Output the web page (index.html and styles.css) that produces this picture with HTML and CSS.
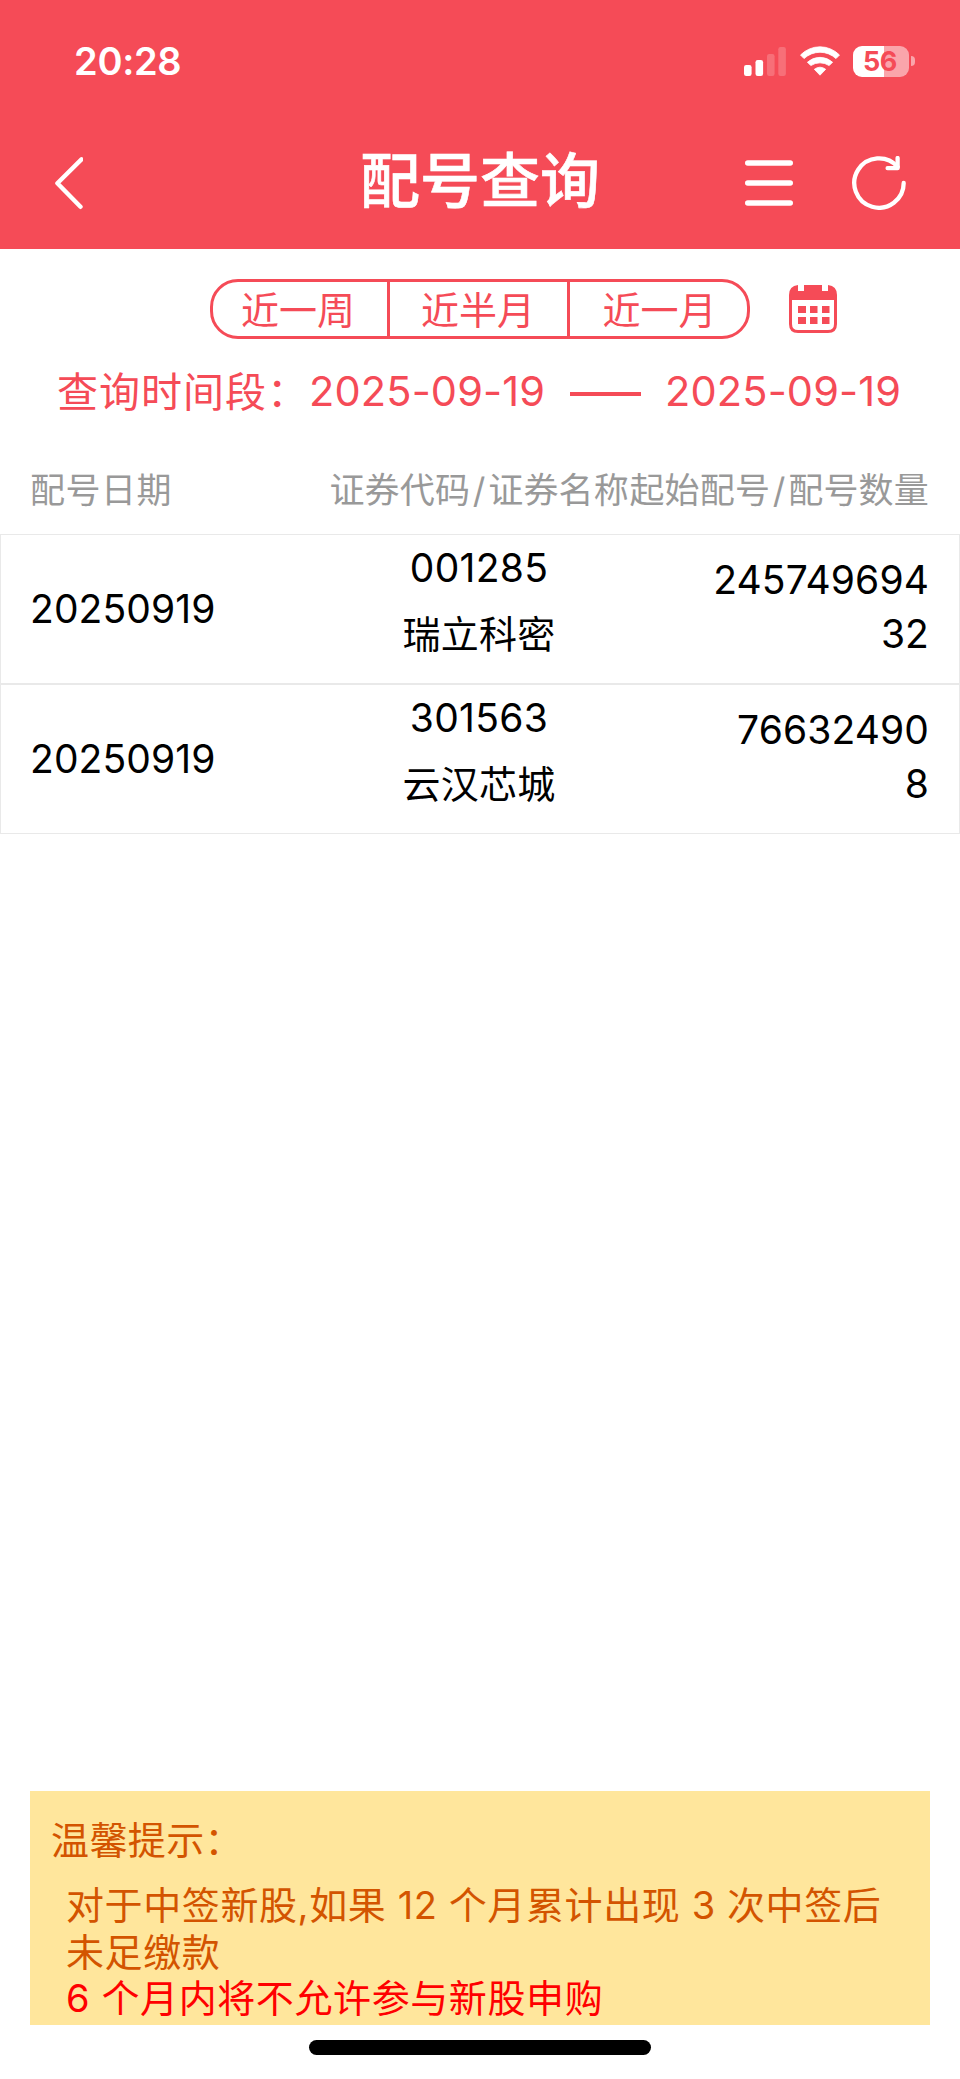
FILE: index.html
```html
<!DOCTYPE html>
<html lang="zh-CN">
<head>
<meta charset="utf-8">
<title>配号查询</title>
<link rel="stylesheet" href="styles.css">
</head>
<body>
<div class="screen">
  <header class="top">
    <div class="status">
      <span class="clock">20:28</span>
      <div class="status-icons">
        <svg class="signal" viewBox="0 0 42 30" width="42" height="30" fill="#fff">
          <rect x="0" y="19" width="7.6" height="11" rx="2.2"/>
          <rect x="11.5" y="14" width="7.6" height="16" rx="2.2"/>
          <rect x="23" y="8" width="7.6" height="22" rx="2.2" opacity=".2"/>
          <rect x="34.3" y="1" width="7.6" height="29" rx="2.2" opacity=".2"/>
        </svg>
        <svg class="wifi" viewBox="0 0 40 30" width="40" height="30" fill="#fff" stroke="#fff" stroke-width=".8" stroke-linejoin="round">
          <path d="M.5 9A27.3 27.3 0 0 1 39.5 9L36 12.6A23.4 23.4 0 0 0 4 12.6Z"/>
          <path d="M7.4 16.2A18.8 18.8 0 0 1 32.6 16.2L29.2 19.6A16.8 16.8 0 0 0 10.8 19.6Z"/>
          <path d="M14.3 23.3A9.6 9.6 0 0 1 25.7 23.3L20 29.2Z"/>
        </svg>
        <div class="battery"><span class="battery-level">56</span><i class="battery-cap"></i></div>
      </div>
    </div>
    <nav class="nav">
      <svg class="back" viewBox="0 0 30 56" width="30" height="56" fill="none" stroke="#fff" stroke-width="4.4" stroke-linecap="round" stroke-linejoin="round"><path d="M28.5 4.3L4.4 28.2L27.5 51.8"/></svg>
      <h1 class="title">配号查询</h1>
      <div class="actions">
        <svg viewBox="0 0 48 48" width="48" height="48" stroke="#fff" stroke-width="5.6" stroke-linecap="round"><path d="M2.8 4h42.4M2.8 24h42.4M2.8 44h42.4"/></svg>
        <svg viewBox="0 0 54 54" width="54" height="54" fill="none" stroke="#fff" stroke-width="4.3" stroke-linecap="round" stroke-linejoin="round"><path d="M51.7 27A24.7 24.7 0 1 1 45.6 10.8"/><path d="M45.6 2V12.2H35.6"/></svg>
      </div>
    </nav>
  </header>

  <main class="content">
    <div class="filters">
      <div class="segments">
        <span class="segment first">近一周</span>
        <span class="segment">近半月</span>
        <span class="segment last">近一月</span>
      </div>
      <svg class="calendar" viewBox="0 0 48 48" width="48" height="48" fill="#f54b57">
        <path d="M9 0V6H15V0H33V6H39V0Q48 1 48 10V39Q48 48 39 48H9Q0 48 0 39V10Q0 1 9 0ZM3 15V39Q3 45 9 45H39Q45 45 45 39V15Z" fill-rule="evenodd"/>
        <path d="M9 21h8v7H9zM21 21h7.5v7H21zM33 21h7.5v7H33zM9 32h8v7H9zM21 32h7.5v7H21zM33 32h7.5v7H33z"/>
      </svg>
    </div>
    <div class="period">
      <span class="period-label">查询时间段：</span>
      <span class="date">2025-09-19</span>
      <i class="dash"></i>
      <span class="date">2025-09-19</span>
    </div>

    <div class="columns">
      <span class="column-start">配号日期</span>
      <span class="column-end">证券代码<b class="slash">/</b>证券名称</span>
      <span class="column-end">起始配号<b class="slash">/</b>配号数量</span>
    </div>
    <section class="rows">
      <article class="row">
        <span>20250919</span>
        <div class="security"><span class="code">001285</span><span class="name">瑞立科密</span></div>
        <div class="allocation"><span>245749694</span><span>32</span></div>
      </article>
      <article class="row">
        <span>20250919</span>
        <div class="security"><span class="code">301563</span><span class="name">云汉芯城</span></div>
        <div class="allocation"><span>76632490</span><span>8</span></div>
      </article>
    </section>
  </main>

  <aside class="notice">
    <p class="notice-title">温馨提示：</p>
    <p class="notice-text">对于中签新股,如果 12 个月累计出现 3 次中签后<br>未足缴款</p>
    <p class="notice-text warning">6 个月内将不允许参与新股申购</p>
  </aside>
  <div class="home-bar"></div>
</div>
</body>
</html>
```
FILE: styles.css
```css
* { box-sizing: border-box; }
body {
  margin: 0;
  background: #fff;
  color: #000;
  font-family: Inter, "Noto Sans CJK SC", sans-serif;
}
p, h1 { margin: 0; }
svg { display: block; flex: none; }
.screen {
  display: flex;
  flex-direction: column;
  width: 960px;
  height: 2079px;
  overflow: hidden;
}
.top { height: 249px; background: #f54b57; color: #fff; }
.status {
  display: flex;
  justify-content: space-between;
  align-items: center;
  height: 122px;
  padding: 0 45px 0 74px;
}
.clock { font-size: 38px; font-weight: 600; line-height: 46px; letter-spacing: -.3px; }
.status-icons { display: flex; align-items: center; }
.wifi { margin: 0 13px 0 14px; }
.battery { display: flex; align-items: center; gap: 2px; width: 62px; }
.battery-level {
  width: 56px;
  height: 31px;
  border-radius: 9px;
  background: linear-gradient(90deg, #fff 31.5px, #faa5ab 31.5px);
  color: #f54b57;
  font-size: 27px;
  font-weight: 700;
  line-height: 31px;
  letter-spacing: -.5px;
  padding-right: 2px;
  text-align: center;
}
.battery-cap { width: 4px; height: 10px; border-radius: 0 5px 5px 0; background: #faa5ab; }
.nav {
  display: grid;
  grid-template-columns: 1fr auto 1fr;
  align-items: center;
  height: 121px;
  padding: 0 54px 0 53px;
}
.title {
  padding: 0 0 3px 1px;
  font-size: 60px;
  font-weight: 500;
  line-height: 80px;
  -webkit-text-stroke: .6px #fff;
}
.actions { display: flex; align-items: center; justify-content: flex-end; gap: 59px; }

.content { flex: 1; }
.filters { display: flex; gap: 39px; padding: 30px 0 0 210px; }
.segments {
  display: grid;
  grid-template-columns: 177px 180px 177px;
  width: 540px;
  height: 60px;
  border: 3px solid #f54b57;
  border-radius: 28px;
  color: #f54b57;
}
.segment {
  padding-right: 1px;
  border-right: 3px solid #f54b57;
  font-size: 38px;
  line-height: 56px;
  text-align: center;
}
.segment.first { padding-right: 4px; }
.segment.last { padding: 0 0 0 2px; border-right: 0; }
.calendar { margin-top: 6px; }
.period {
  display: flex;
  align-items: center;
  height: 60px;
  margin: 22px 0 1px;
  padding-left: 57px;
  color: #f54b57;
  font-size: 41.5px;
}
.period-label {
  width: 252px;
  padding-bottom: 4px;
  font-size: 41px;
  letter-spacing: 1px;
  white-space: nowrap;
}
.date { width: 236px; letter-spacing: .15px; white-space: nowrap; }
.dash { width: 71px; height: 4px; margin: 6px 24px 0 25px; background: #f54b57; }
.columns {
  display: grid;
  grid-template-columns: 1fr 300px 300px;
  height: 112px;
  padding: 0 31px 0 30px;
  color: #999;
  font-size: 35px;
  letter-spacing: .2px;
  line-height: 136px;
  white-space: nowrap;
}
.column-start { letter-spacing: .5px; }
.column-end { text-align: right; }
.slash { display: inline-block; width: 18px; font-weight: 400; text-align: center; }
.row {
  display: grid;
  grid-template: 147px / repeat(3, 1fr);
  align-items: center;
  height: 150px;
  padding: 0 30px 0 29px;
  border: 1px solid #e9e9e9;
  font-size: 39px;
  letter-spacing: .1px;
}
.security {
  display: flex;
  flex-direction: column;
  align-self: start;
  align-items: center;
  padding-right: 1px;
}
.code { line-height: 65px; letter-spacing: .3px; }
.name { line-height: 68px; font-size: 38px; letter-spacing: .2px; }
.allocation {
  display: flex;
  flex-direction: column;
  align-items: flex-end;
  padding-bottom: 3px;
  line-height: 54px;
}

.notice {
  height: 234px;
  margin: 0 30px;
  padding: 26px 21px 0;
  background: #ffe69c;
  color: #d35400;
  font-size: 38px;
  letter-spacing: .6px;
}
.notice-title { line-height: 46px; letter-spacing: .4px; }
.notice-text { padding-left: 15px; line-height: 46.5px; white-space: nowrap; }
.notice-title + .notice-text { margin-top: 19px; }
.warning { color: #f00; }
.home-bar { flex: none; width: 342px; height: 15px; margin: 15px auto 24px; border-radius: 8px; background: #000; }
```
